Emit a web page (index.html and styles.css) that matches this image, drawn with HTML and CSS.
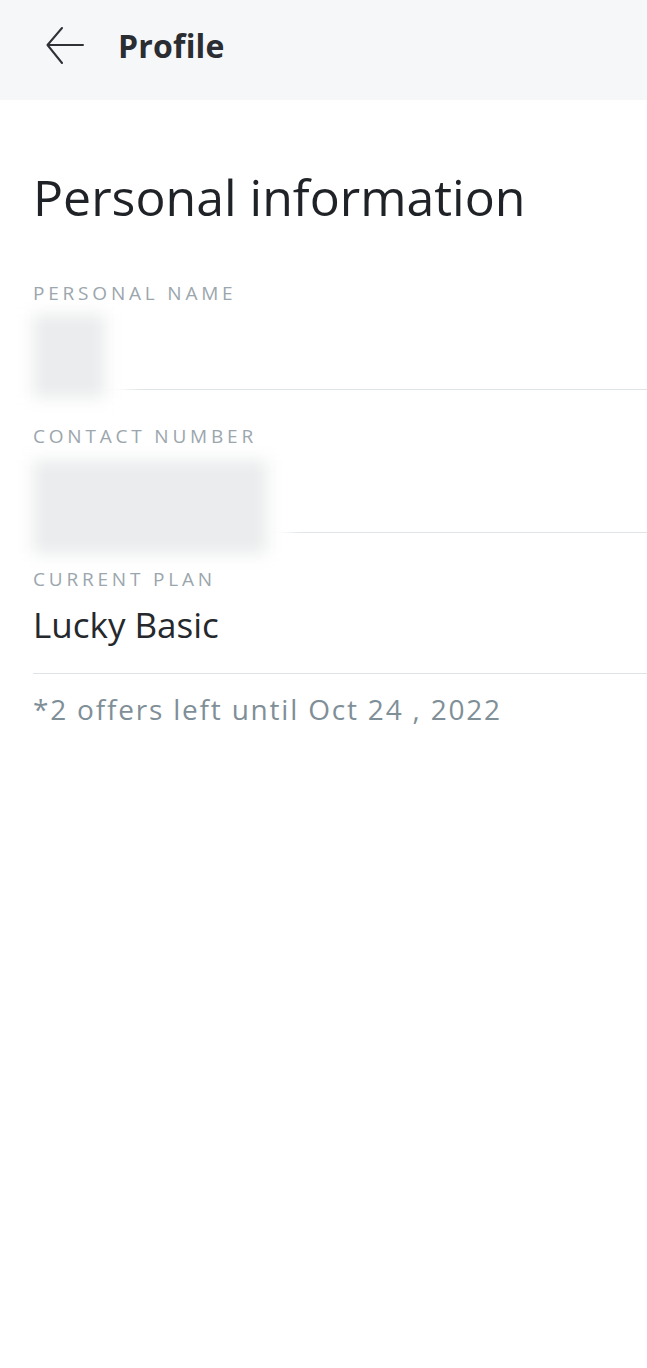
FILE: index.html
```html
<!DOCTYPE html>
<html lang="en">
<head>
<meta charset="utf-8">
<title>Profile</title>
<link rel="stylesheet" href="styles.css">
</head>
<body>
<header class="topbar">
  <svg class="back" width="40" height="38" viewBox="0 0 40 38" aria-hidden="true">
    <path d="M16 1 L1.5 18 L16 36 M1.5 18 L37 18" fill="none" stroke="#2e3236" stroke-width="2" stroke-linecap="round" stroke-linejoin="round"/>
  </svg>
  <span class="topbar-title">Profile</span>
</header>
<main class="content">
  <h1 class="heading">Personal information</h1>
  <section class="field field-redacted">
    <div class="label">PERSONAL NAME</div>
    <div class="value value-blank"></div>
    <div class="redact redact-name"></div>
  </section>
  <section class="field field-redacted">
    <div class="label">CONTACT NUMBER</div>
    <div class="value value-blank"></div>
    <div class="redact redact-phone"></div>
  </section>
  <section class="field field-plan">
    <div class="label">CURRENT PLAN</div>
    <div class="value value-plan">Lucky Basic</div>
  </section>
  <p class="note">*2 offers left until Oct 24 , 2022</p>
</main>
</body>
</html>
```
FILE: styles.css
```css
html, body {
  margin: 0;
  padding: 0;
  background: #ffffff;
  font-family: "Open Sans", "Noto Sans", "Liberation Sans", sans-serif;
  color: #23262a;
}

.topbar {
  height: 100px;
  background: #f6f7f9;
  display: flex;
  align-items: center;
  padding-left: 46px;
  padding-bottom: 8px;
  box-sizing: border-box;
}

.back {
  display: block;
}

.topbar-title {
  margin-left: 32px;
  font-size: 32px;
  line-height: 1.2;
  font-weight: 700;
  color: #2a2d31;
  letter-spacing: 0.2px;
}

.content {
  padding-left: 33px;
}

.heading {
  margin: 67px 0 0 0;
  font-size: 50px;
  line-height: 1.2;
  font-weight: 400;
  color: #1f2226;
  letter-spacing: 0;
}

.field {
  border-bottom: 1px solid #dfe4e6;
  margin-top: 55px;
}

.field + .field {
  margin-top: 35px;
}

.field-redacted {
  position: relative;
}

.label {
  position: relative;
  z-index: 1;
  font-size: 19px;
  line-height: 1.2;
  letter-spacing: 3.8px;
  color: #9ba6ad;
}

.value-blank {
  height: 84px;
}

.value-plan {
  font-size: 35px;
  line-height: 1.2;
  color: #25282c;
  padding-top: 14px;
  padding-bottom: 27px;
}

.field-plan {
  margin-top: 34px;
}

.redact {
  position: absolute;
  background: #eaeced;
  box-shadow: 0 0 0 24px rgba(255, 255, 255, 0.95);
  filter: blur(8px);
}

.redact-name {
  left: 0;
  top: 32px;
  width: 72px;
  height: 84px;
}

.redact-phone {
  left: 0;
  top: 35px;
  width: 234px;
  height: 94px;
}

.note {
  margin: 19px 0 0 0;
  font-size: 28px;
  line-height: 1.2;
  letter-spacing: 1.8px;
  color: #7f8f98;
}
```
